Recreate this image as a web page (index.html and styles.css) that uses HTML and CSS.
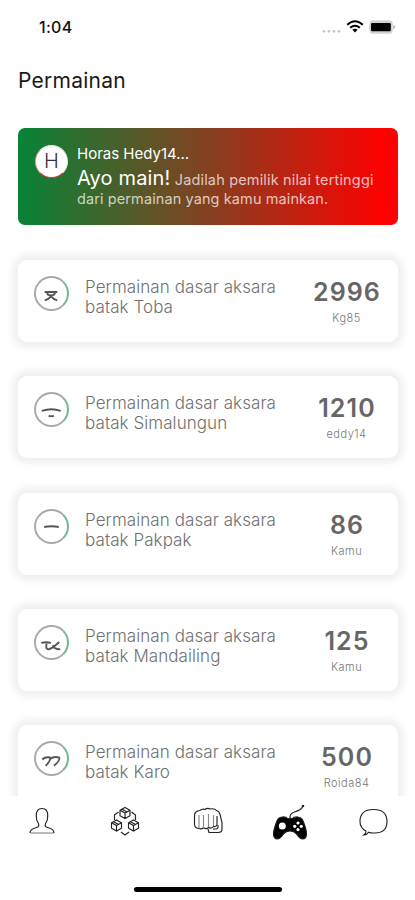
FILE: index.html
```html
<!DOCTYPE html>
<html lang="id">
<head>
<meta charset="utf-8">
<meta name="viewport" content="width=device-width">
<title>Permainan</title>
<link rel="stylesheet" href="styles.css">
</head>
<body>
<div class="app">
  <header class="status">
    <span class="time">1:04</span>
    <svg class="status-icons" viewBox="0 0 76 18" width="76" height="18">
      <g fill="#c9c9c9"><circle cx="3" cy="13.3" r="1.4"/><circle cx="8" cy="13.3" r="1.4"/><circle cx="13" cy="13.3" r="1.4"/><circle cx="18" cy="13.3" r="1.4"/></g>
      <g fill="none" stroke="#000" stroke-width="2"><path d="M26.2 6.8Q34 -.2 41.8 6.8"/><path d="M29.2 9.8Q34 5.6 38.8 9.8"/></g>
      <path d="M31.4 11.8Q34 9.8 36.6 11.8L34 14.6Z"/>
      <rect x="48.300" y="2.300" width="23.400" height="13.400" rx="3.6" fill="#d2d2d2"/>
      <rect x="50" y="5" width="19.8" height="8.2" rx="1.2"/>
      <path d="M72.400 7v4.4q3.4-2.2 0-4.4" fill="#aaa"/>
    </svg>
  </header>
  <h1 class="title">Permainan</h1>
  <main class="content">
    <section class="banner">
      <div class="initial">H</div>
      <div class="banner-text">
        <p class="hello">Horas Hedy14...</p>
        <p class="invite"><strong>Ayo main!</strong> Jadilah pemilik nilai tertinggi</p>
        <p class="invite second">dari permainan yang kamu mainkan.</p>
      </div>
    </section>
    <article class="card">
      <div class="glyph"><svg viewBox="0 0 36 36"><path d="M11 16.500H24M13.500 17q0 3 4 3t4-3M11 25Q14.500 24.500 17.500 21Q20.500 24.500 24 25"/></svg></div>
      <p class="name">Permainan dasar aksara<br>batak Toba</p>
      <div class="score"><b>2996</b><span>Kg85</span></div>
    </article>
    <article class="card">
      <div class="glyph"><svg viewBox="0 0 36 36"><path d="M8 19.500Q18 16 27.500 19.500M15 24.500q3 .8 5.500 0"/></svg></div>
      <p class="name">Permainan dasar aksara<br>batak Simalungun</p>
      <div class="score"><b>1210</b><span>eddy14</span></div>
    </article>
    <article class="card">
      <div class="glyph"><svg viewBox="0 0 36 36"><path d="M10.500 18.500Q18 17 25.500 18.500"/></svg></div>
      <p class="name">Permainan dasar aksara<br>batak Pakpak</p>
      <div class="score"><b>86</b><span>Kamu</span></div>
    </article>
    <article class="card">
      <div class="glyph"><svg viewBox="0 0 36 36"><path d="M7.500 18.500q5-1.500 10 0M13 19Q11.500 25 15 25Q19 24 26 17.500M19 21Q20.500 25 27 25"/></svg></div>
      <p class="name">Permainan dasar aksara<br>batak Mandailing</p>
      <div class="score"><b>125</b><span>Kamu</span></div>
    </article>
    <article class="card">
      <div class="glyph"><svg viewBox="0 0 36 36"><path d="M8.500 19q3-3 8-2Q17.500 20 12 25.500M16.500 18.500q4-3 9.500-1.500Q27 20 20.500 25.500"/></svg></div>
      <p class="name">Permainan dasar aksara<br>batak Karo</p>
      <div class="score"><b>500</b><span>Roida84</span></div>
    </article>
  </main>
  <nav class="tabs">
    <svg viewBox="0 0 36 36"><path class="soft" d="M6.500 29H30"/><path d="M6 29q0-3.500 5-5l3.200-1.300q1-1 .3-3Q12 16.500 12.300 12q-.3-7.500 5.700-7.500T23.700 12q.3 4.500-2.200 7.700-.7 2 .3 3L25 24q5 1.500 5 5"/></svg>
    <svg viewBox="0 0 36 36"><path d="M11.500 8 7.500 11v5M24.500 8 28.500 11v5M14 28l4 3 4-3"/><path id="cube" d="M18 3.500l5 2.800v5.400l-5 2.800-5-2.800V6.300ZM13.500 6.500l4.500 2.600 4.500-2.600M18 9v5M15 5.200l4.700 2.600"/><use href="#cube" x="-8.500" y="12.500"/><use href="#cube" x="8.500" y="12.500"/></svg>
    <svg viewBox="0 0 36 36"><path d="M10 6.500Q4.500 7 4.500 12v8q0 4 4 4.500 3 1 5-.7 3 1.700 5-.3 3 1.500 5-1 3 .5 3.500-2V12M10 6.500q2-2 5-1 2-2 5.500-.5 4-1 6 1.500 3 1 3.500 4l2 8v7q0 3-4 3h-9l-1-3.500M23 25h3q2.500 0 2-4"/><path class="soft" d="M9 11v13M13.500 11v13M18.500 10v13M23.500 11v11"/></svg>
    <svg class="pad" viewBox="0 0 36 40"><path class="cord" d="M18.500 16q-2-5 4-7 7-2 8.500-6"/><circle class="fill" cx="31" cy="3" r=".7"/><path class="fill" d="M10 14q4-.5 5.500 1.500h5Q22 13.500 26 14q4 .3 5.300 4.500 3.200 8 3.200 12.500 0 5-4 5-2.500 0-6-5-2.500-3-6.500-3t-6.500 3Q8 36 5.500 36q-4 0-4-5 0-4 3.200-12.500Q6 14.300 10 14Z"/><circle class="hole" cx="10.300" cy="23" r="3.500"/><g class="hole"><circle cx="26" cy="20" r="1.600"/><circle cx="26" cy="26.600" r="1.600"/><circle cx="22.700" cy="23.300" r="1.600"/><circle cx="29.300" cy="23.300" r="1.600"/></g></svg>
    <svg viewBox="0 0 36 36"><path d="M11 27Q5 24 5 17.500 5 5.500 18.500 5.500T32 17.500 18.500 29q-3 0-5-.8-1.500 2.500-4.500 2.800Q11 29.500 11 27Z"/></svg>
  </nav>
  <div class="home"></div>
</div>
</body>
</html>
```
FILE: styles.css
```css
* { box-sizing: border-box; margin: 0; padding: 0; }
body { background: #fff; font-family: Inter, "Liberation Sans", sans-serif; }
.app { width: 415px; height: 900px; display: flex; flex-direction: column; overflow: hidden; }
.status { height: 54px; flex: none; padding: 0 18px 0 39px; display: flex; align-items: center; justify-content: space-between; }
.time { font-size: 16px; font-weight: 500; line-height: 20px; letter-spacing: .3px; color: #111; }
.title { height: 54px; flex: none; padding-left: 18px; line-height: 54px; font-size: 21px; font-weight: 400; letter-spacing: .25px; color: #1a1a1a; }
.content { height: 688px; flex: none; overflow: hidden; padding: 20px 17px 0 18px; }
.banner { height: 97px; border-radius: 7px; background: linear-gradient(90deg, #078337, #844020 50%, #f00 97%); display: flex; padding: 17px 0 0 17px; margin-bottom: 35px; }
.initial { width: 33px; height: 33px; border-radius: 50%; background: #fff; border: 1px solid #e6e6e6; border-bottom-color: #e33; border-left-color: #e99; color: #333; font-size: 20px; font-weight: 300; line-height: 31px; text-align: center; }
.banner-text { margin-left: 9px; white-space: nowrap; }
.hello { color: #fff; font-size: 15px; line-height: 18px; }
.invite { color: #fffb; font-size: 14.5px; line-height: 20px; letter-spacing: .16px; margin-top: 5px; }
.invite.second { margin-top: -1px; letter-spacing: .1px; }
.invite strong { color: #fff; font-size: 20px; font-weight: 400; }
.card { height: 82px; border-radius: 9px; background: #fff; box-shadow: 0 0 9px 5px #eee; display: flex; padding: 16px 0 0 16px; margin-bottom: 34.250px; }
.glyph { width: 35px; height: 35px; border-radius: 50%; border: 2px solid #aaa; border-right-color: #72b895; display: flex; flex: none; }
.glyph svg { width: 35px; height: 35px; margin: -2px; flex: none; fill: none; stroke: #555; stroke-width: 1.900; }
.name { width: 220px; margin: 1px 0 0 16px; font-size: 17px; line-height: 20px; letter-spacing: .07px; color: #707070; font-weight: 300; white-space: nowrap; }
.score { width: 84px; display: flex; flex-direction: column; align-items: center; color: #666; }
.score b { font-size: 25px; font-weight: 600; line-height: 33px; letter-spacing: 1.100px; }
.score span { font-size: 11px; line-height: 16px; letter-spacing: .5px; color: #777; font-weight: 300; margin: 1px 1px 0 0; }
.tabs { height: 86px; flex: none; display: flex; justify-content: space-between; padding: 8px 24px 0; }
.tabs svg { width: 36px; height: 36px; fill: none; stroke: #222; stroke-width: 1.150; }
.tabs .soft { stroke: #888; }
.tabs .pad { height: 40px; margin-top: -1px; }
.pad .fill { fill: #000; }
.pad .hole { fill: #fff; stroke: none; }
.home { width: 148px; height: 5px; border-radius: 3px; background: #000; margin: 5px auto 0; }
```
